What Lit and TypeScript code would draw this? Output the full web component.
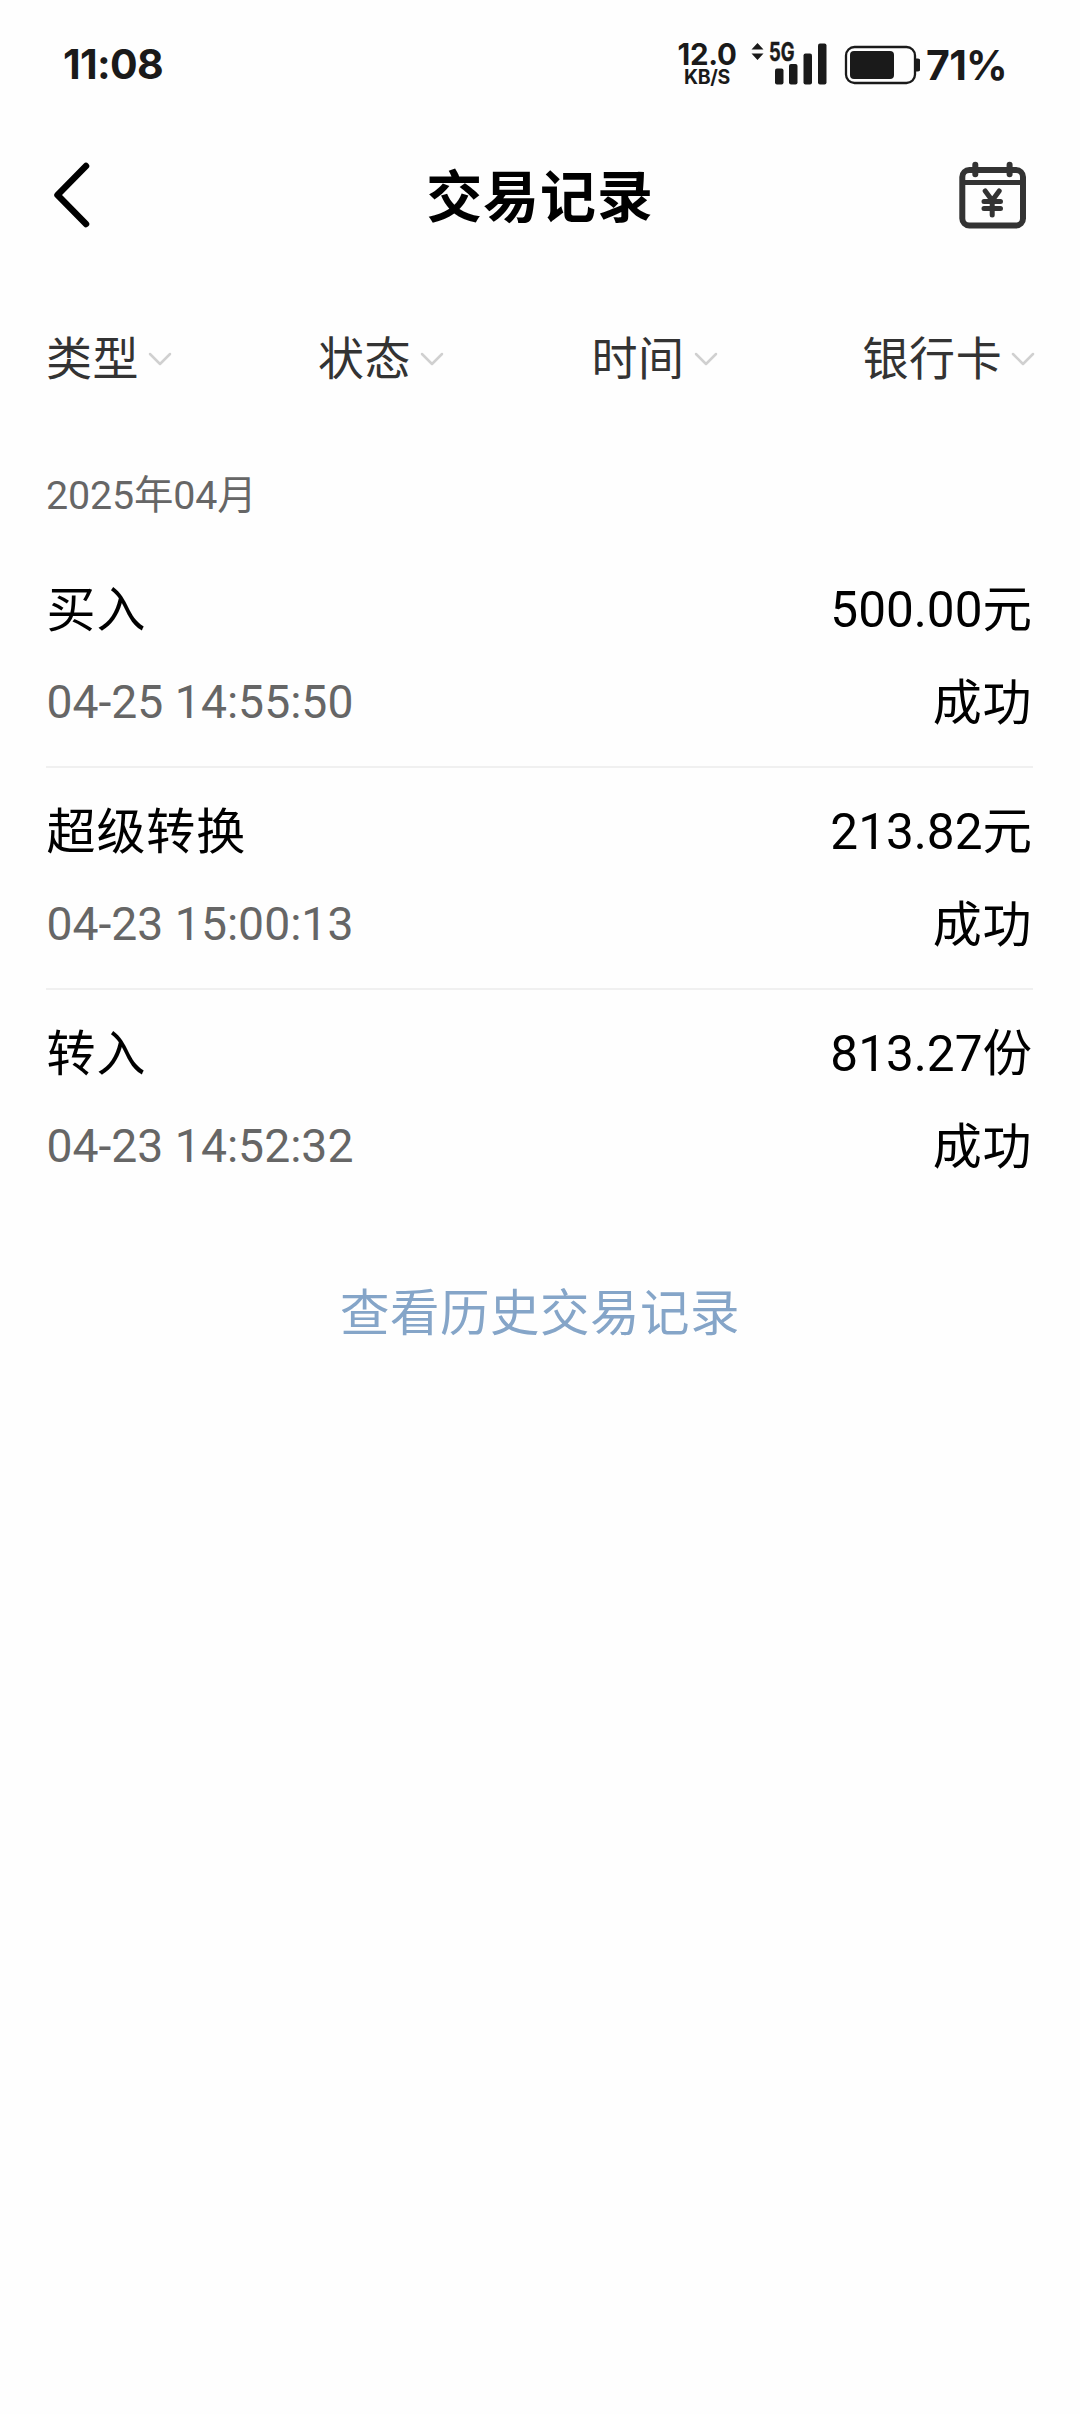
import { LitElement, html, css } from "lit";
import { customElement } from "lit/decorators.js";

interface TradeRecord {
  kind: string;
  amount: string;
  time: string;
  state: string;
}

const FILTERS = ["类型", "状态", "时间", "银行卡"];

const RECORDS: TradeRecord[] = [
  { kind: "买入", amount: "500.00元", time: "04-25 14:55:50", state: "成功" },
  { kind: "超级转换", amount: "213.82元", time: "04-23 15:00:13", state: "成功" },
  { kind: "转入", amount: "813.27份", time: "04-23 14:52:32", state: "成功" },
];

@customElement("status-bar")
class StatusBar extends LitElement {
  static styles = css`
    :host {
      display: flex;
      height: 130px;
      box-sizing: border-box;
      padding: 0 72px 0 63px;
      color: #1a1a1a;
      font-family: Inter, "Liberation Sans", sans-serif;
      font-weight: 700;
      white-space: nowrap;
    }
    .clock {
      flex: 1;
      padding-top: 39px;
      font-size: 41px;
      line-height: 50px;
      letter-spacing: -0.7px;
      font-weight: 650;
    }
    .speed {
      width: 60px;
      margin-right: 14px;
      padding-top: 41px;
      display: flex;
      flex-direction: column;
      align-items: center;
    }
    .rate {
      font-size: 29.5px;
      line-height: 27px;
      letter-spacing: -0.3px;
    }
    .unit {
      font-size: 19.5px;
      line-height: 19px;
      font-weight: 700;
      letter-spacing: -0.3px;
    }
    svg {
      display: block;
    }
    .signal {
      margin-right: 17px;
    }
    .battery {
      margin-right: 6px;
    }
    .level {
      padding-top: 40px;
      width: 82px;
      font-size: 41px;
      line-height: 50px;
      letter-spacing: -0.7px;
      font-weight: 650;
    }
  `;

  render() {
    return html`
      <div class="clock">11:08</div>
      <div class="speed">
        <div class="rate">12.0</div>
        <div class="unit">KB/S</div>
      </div>
      <svg class="signal" width="76" height="130" viewBox="751 0 76 130" fill="#1a1a1a">
        <path d="M751.5 49.5 L757.5 43 L763.5 49.5Z M751.5 53.5 L757.5 60 L763.5 53.5Z" />
        <text x="769" y="61" font-size="25" font-weight="700" stroke="#1a1a1a" stroke-width="0.5" textLength="25.5" lengthAdjust="spacingAndGlyphs">5G</text>
        <rect x="775" y="68.5" width="8.5" height="16" rx="2" />
        <rect x="789" y="64" width="8.5" height="20.5" rx="2" />
        <rect x="803.5" y="53.5" width="8.5" height="31" rx="2" />
        <rect x="818" y="43.5" width="8.5" height="41" rx="2" />
      </svg>
      <svg class="battery" width="76" height="130" viewBox="844 0 76 130" fill="#1a1a1a">
        <rect x="846" y="47" width="69" height="36" rx="8.5" fill="none" stroke="#1a1a1a" stroke-width="2.3" />
        <rect x="850" y="51" width="44" height="28" rx="4" />
        <path d="M916 58.5 h1.5 a3 3 0 0 1 3 3 v7 a3 3 0 0 1 -3 3 h-1.5z" />
      </svg>
      <div class="level">71%</div>
    `;
  }
}

@customElement("page-header")
class PageHeader extends LitElement {
  static styles = css`
    :host {
      display: grid;
      grid-template-columns: 160px 1fr 160px;
      align-items: center;
      height: 130px;
    }
    svg {
      display: block;
    }
    .back {
      margin-left: 50px;
    }
    .title {
      padding-top: 5px;
      text-align: center;
      font-size: 56px;
      letter-spacing: 0.9px;
      font-weight: 700;
      line-height: 80px;
      color: #000;
    }
    .calendar {
      justify-self: end;
      margin-right: 52px;
    }
  `;

  render() {
    return html`
      <svg class="back" width="44" height="72" viewBox="50 158.5 44 72" fill="none" stroke="#000" stroke-width="6.5" stroke-linecap="round" stroke-linejoin="round">
        <path d="M86 165.5 L57.5 194.5 L86 223.5" />
      </svg>
      <div class="title">交易记录</div>
      <svg class="calendar" width="72" height="72" viewBox="956 159 72 72" fill="none" stroke="#333" stroke-width="6" stroke-linecap="round" stroke-linejoin="round">
        <rect x="962.3" y="170" width="60.7" height="55.5" rx="7" />
        <path d="M964 182.5 H1021" stroke-linecap="butt" stroke-width="5" />
        <path d="M975.3 164.7 V174.3 M1009.6 164.7 V174.3" />
        <path stroke-width="5" d="M985.2 191 L992.2 200.5 L999.2 191 M992.2 201 V215 M984 201.5 H1000.5 M984 208.5 H1000.5" />
      </svg>
    `;
  }
}

@customElement("filter-bar")
class FilterBar extends LitElement {
  static styles = css`
    :host {
      display: grid;
      grid-template-columns: 272px 273.5px 271px auto;
      align-items: center;
      height: 194px;
      padding-left: 46px;
      color: #333;
      font-size: 46px;
      line-height: 60px;
    }
    .filter {
      display: flex;
      align-items: center;
      gap: 9px;
    }
    .label {
      padding-top: 4px;
      letter-spacing: 0.6px;
    }
    svg {
      display: block;
      margin-top: 4px;
    }
  `;

  render() {
    return FILTERS.map(
      (label) => html`
        <div class="filter">
          <span class="label">${label}</span>
          <svg width="24" height="16" viewBox="0 0 24 16" fill="none" stroke="#d0d0d0" stroke-width="2.5" stroke-linecap="round" stroke-linejoin="round">
            <path d="M2 3 L12 13 L22 3" />
          </svg>
        </div>
      `,
    );
  }
}

@customElement("trade-row")
class TradeRow extends LitElement {
  static properties = { record: { attribute: false } };
  declare record: TradeRecord;

  static styles = css`
    :host {
      display: flex;
      flex-direction: column;
      box-sizing: border-box;
      height: 220px;
      padding: 18px 1px 0 0.5px;
      color: #000;
      font-size: 49px;
      letter-spacing: 0.6px;
    }
    .line {
      display: flex;
      justify-content: space-between;
      height: 92px;
      line-height: 92px;
    }
    .kind {
      padding-top: 1px;
      letter-spacing: 0.9px;
    }
    .amount {
      font-size: 49.5px;
      letter-spacing: 0;
    }
    .time {
      font-size: 46.3px;
      letter-spacing: 0;
      color: #666;
    }
    .state {
      padding-top: 2px;
    }
  `;

  render() {
    const { kind, amount, time, state } = this.record;
    return html`
      <div class="line"><span class="kind">${kind}</span><span class="amount">${amount}</span></div>
      <div class="line"><span class="time">${time}</span><span class="state">${state}</span></div>
    `;
  }
}

@customElement("app-root")
class AppRoot extends LitElement {
  static styles = css`
    :host {
      display: block;
      min-height: 2414px;
      background: #fefefe;
      font-family: Roboto, "Noto Sans CJK SC", sans-serif;
      font-weight: 400;
    }
    .month {
      height: 92px;
      padding-left: 46px;
      font-size: 39.4px;
      letter-spacing: -0.15px;
      line-height: 84px;
      color: #666;
    }
    .records {
      padding: 0 47px 0 46px;
    }
    .record {
      display: block;
      border-bottom: 2px solid #f0f0f0;
      height: 220px;
    }
    .record:last-child {
      border-bottom-color: transparent;
    }
    .history {
      display: block;
      padding-top: 64px;
      text-align: center;
      font-size: 49.5px;
      letter-spacing: 0.5px;
      line-height: 76px;
      color: #85a5c8;
    }
  `;

  render() {
    return html`
      <status-bar></status-bar>
      <page-header></page-header>
      <filter-bar></filter-bar>
      <div class="month">2025年04月</div>
      <div class="records">
        ${RECORDS.map((r) => html`<div class="record"><trade-row .record=${r}></trade-row></div>`)}
      </div>
      <div class="history">查看历史交易记录</div>
    `;
  }
}
